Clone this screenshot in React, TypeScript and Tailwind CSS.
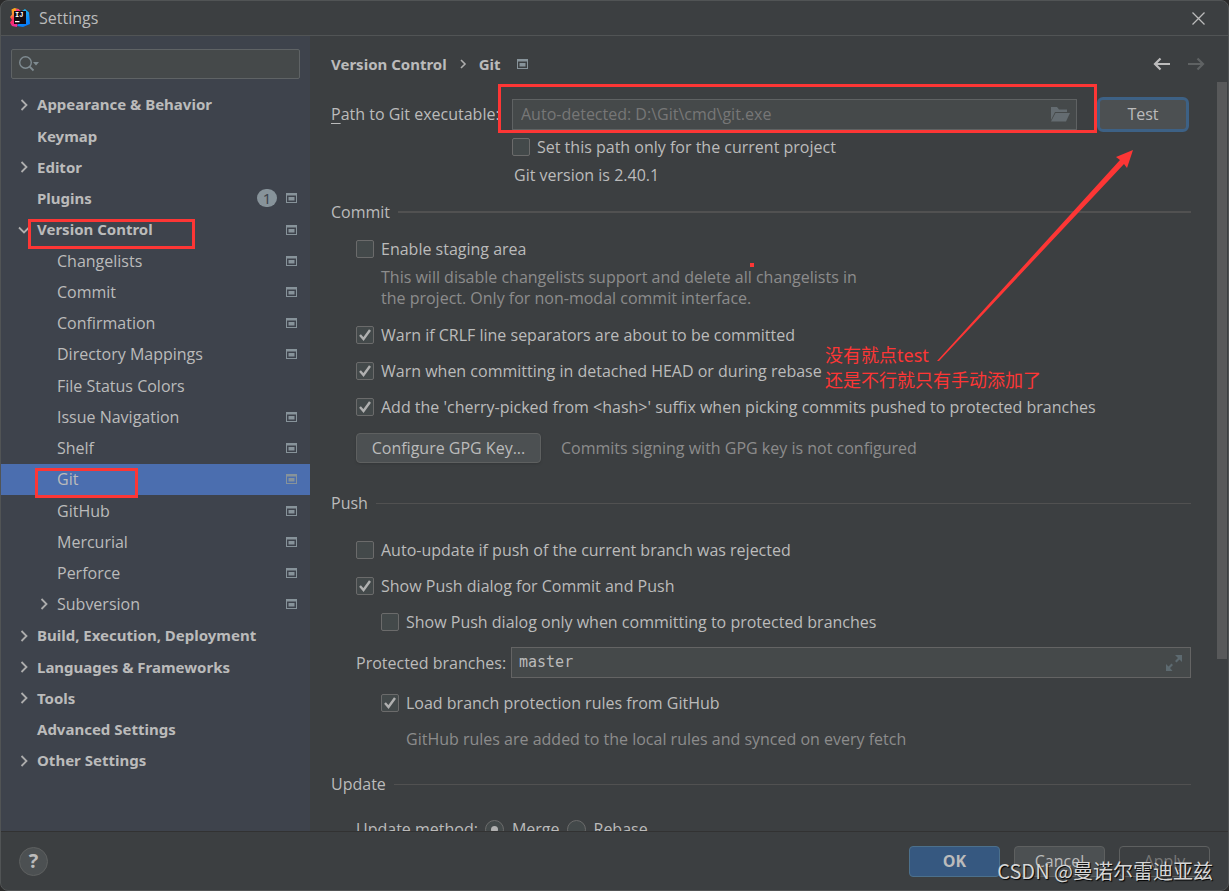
import { useState } from 'react';
import type { ReactNode } from 'react';

type TreeItem = {
  label: string;
  level?: number;
  arrow?: 'right' | 'down';
  project?: boolean;
  badge?: number;
};

const TREE: TreeItem[] = [
  { label: 'Appearance & Behavior', arrow: 'right' },
  { label: 'Keymap' },
  { label: 'Editor', arrow: 'right' },
  { label: 'Plugins', badge: 1, project: true },
  { label: 'Version Control', arrow: 'down', project: true },
  { label: 'Changelists', level: 1, project: true },
  { label: 'Commit', level: 1, project: true },
  { label: 'Confirmation', level: 1, project: true },
  { label: 'Directory Mappings', level: 1, project: true },
  { label: 'File Status Colors', level: 1 },
  { label: 'Issue Navigation', level: 1, project: true },
  { label: 'Shelf', level: 1, project: true },
  { label: 'Git', level: 1, project: true },
  { label: 'GitHub', level: 1, project: true },
  { label: 'Mercurial', level: 1, project: true },
  { label: 'Perforce', level: 1, project: true },
  { label: 'Subversion', level: 1, arrow: 'right', project: true },
  { label: 'Build, Execution, Deployment', arrow: 'right' },
  { label: 'Languages & Frameworks', arrow: 'right' },
  { label: 'Tools', arrow: 'right' },
  { label: 'Advanced Settings' },
  { label: 'Other Settings', arrow: 'right' },
];

function Logo() {
  return (
    <svg width="20" height="20" viewBox="0 0 20 20" aria-hidden="true">
      <defs>
        <linearGradient id="warm" x1="0" y1="0" x2="0.3" y2="1">
          <stop offset="0" stopColor="#fdb60d" />
          <stop offset="0.4" stopColor="#fc8a3a" />
          <stop offset="0.6" stopColor="#fe2857" />
          <stop offset="1" stopColor="#f0309a" />
        </linearGradient>
        <linearGradient id="cool" x1="0" y1="0" x2="0.4" y2="1">
          <stop offset="0" stopColor="#20c5f0" />
          <stop offset="1" stopColor="#087cfa" />
        </linearGradient>
      </defs>
      <path d="M12 3 15 1l4 3.500L20 16l-7 3-6-1 4-6z" fill="url(#cool)" />
      <path d="M1.500 1.500 4.500 0l4 1 3 4-4 10-.5 4-5-1L0 14.500 2 12 0 9l2-2.500z" fill="url(#warm)" />
      <path d="M6 1 9 1.500 12 4H6z" fill="#fe2f8c" />
      <path d="M4 3h12v13H4z" fill="#120a10" />
      <text x="5" y="9" fill="#fff" fontSize="7" fontWeight="700" fontFamily="Liberation Mono, monospace">
        IJ
      </text>
      <path d="M5 13h4.500v1.200H5z" fill="#fff" />
    </svg>
  );
}

function Chevron({ dir }: { dir?: 'right' | 'down' }) {
  return (
    <svg width="12" height="12" viewBox="0 0 12 12" fill="none" stroke="#adadad" strokeWidth="1.8" aria-hidden="true">
      {dir === 'right' && <path d="M3.500 1 8.500 6l-5 5" />}
      {dir === 'down' && <path d="M1 3.500 6 8.500l5-5" />}
    </svg>
  );
}

function ProjectIcon() {
  return (
    <svg width="11" height="10" viewBox="0 0 11 10" className="shrink-0" aria-hidden="true">
      <path d="M0 0h11v10H0zM1 2.500V9h9V2.500z" fill="#87939a" fillRule="evenodd" />
      <path d="M2.500 4h6v3.500h-6z" fill="#87939a" />
    </svg>
  );
}

function Check({
  id,
  label,
  initial = false,
}: {
  id: string;
  label: string;
  initial?: boolean;
}) {
  const [checked, setChecked] = useState(initial);

  return (
    <div className="flex h-6 items-center gap-[7px]">
      <span className="grid size-[18px] shrink-0">
        <input
          type="checkbox"
          id={id}
          checked={checked}
          onChange={(e) => setChecked(e.target.checked)}
          className="col-start-1 row-start-1 size-[18px] appearance-none rounded-xs border border-[#6b6b6b] bg-[#43494a]"
        />
        {checked && (
          <svg
            viewBox="0 0 18 18"
            fill="none"
            stroke="#b0b0b0"
            strokeWidth="2.400"
            className="pointer-events-none col-start-1 row-start-1"
            aria-hidden="true"
          >
            <path d="M4 9l3.500 4L14 4" />
          </svg>
        )}
      </span>
      <label htmlFor={id} className="whitespace-nowrap">
        {label}
      </label>
    </div>
  );
}

function Section({ title, thick = false }: { title: string; thick?: boolean }) {
  return (
    <div className="flex h-6 items-center gap-2">
      <h2>{title}</h2>
      <hr className={`flex-1 border-0 bg-[#515151] ${thick ? 'h-[2px]' : 'h-px'}`} />
    </div>
  );
}

function Radio({
  value,
  current,
  onSelect,
}: {
  value: string;
  current: string;
  onSelect: (value: string) => void;
}) {
  return (
    <label className="flex items-center gap-2">
      <span className="grid size-[19px] shrink-0 place-items-center">
        <input
          type="radio"
          name="update-method"
          checked={current === value}
          onChange={() => onSelect(value)}
          className="col-start-1 row-start-1 size-[19px] appearance-none rounded-full border border-[#6b6b6b] bg-[#43494a]"
        />
        {current === value && (
          <span className="pointer-events-none col-start-1 row-start-1 size-[7px] rounded-full bg-[#b0b0b0]" />
        )}
      </span>
      {value}
    </label>
  );
}

function DialogButton({ children, className }: { children: ReactNode; className: string }) {
  return (
    <button type="button" className={`h-[31px] w-[91px] rounded-sm border ${className}`}>
      {children}
    </button>
  );
}

function Sidebar() {
  const [selected, setSelected] = useState('Git');
  const [query, setQuery] = useState('');

  return (
    <aside className="flex w-[309px] shrink-0 flex-col bg-[#3e434c] pb-[55px]">
      <div className="mx-[10px] mt-[13px] mb-[10px] flex h-[30px] items-center rounded-xs border border-[#5f6365] bg-[#45494a] pl-[7px]">
        <svg width="21" height="16" viewBox="0 0 21 16" fill="none" aria-hidden="true">
          <circle cx="6.500" cy="6.500" r="5.800" stroke="#7f8b91" strokeWidth="1.400" />
          <path d="M10.500 10.500l4 4" stroke="#7f8b91" strokeWidth="1.800" />
          <path d="M14 6h6l-3 3.500z" fill="#7f8b91" />
        </svg>
        <input
          type="text"
          aria-label="Search settings"
          value={query}
          onChange={(e) => setQuery(e.target.value)}
          className="min-w-0 flex-1 bg-transparent px-1 outline-none"
        />
      </div>

      <ul className="flex flex-1 flex-col">
        {TREE.map((item) => (
          <li key={item.label} className="flex flex-1">
            <button
              type="button"
              onClick={() => setSelected(item.label)}
              className={`flex flex-1 items-center gap-[7px] pr-[13px] text-left ${
                item.level ? 'pl-[37px]' : "pl-[17px] font-['Noto_Sans',sans-serif] text-[15px] font-bold"
              } ${selected === item.label ? 'bg-[#4b6eaf]' : ''}`}
            >
              <Chevron dir={item.arrow} />
              <span className="flex-1 whitespace-nowrap">{item.label}</span>
              {item.badge && (
                <span className="mr-[2px] flex h-[18px] w-5 items-center justify-center rounded-full bg-[#87939a] font-normal text-[#3e434c]">
                  {item.badge}
                </span>
              )}
              {item.project && <ProjectIcon />}
            </button>
          </li>
        ))}
      </ul>
    </aside>
  );
}

function GitSettings() {
  const [path, setPath] = useState('');
  const [branches, setBranches] = useState('master');
  const [method, setMethod] = useState('Merge');

  return (
    <main className="flex min-w-0 flex-1 flex-col">
      <div className="flex h-[46px] shrink-0 items-center pt-[10px] pr-[23px] pl-[21px] font-['Noto_Sans',sans-serif] text-[15px] font-bold">
        <span>Version Control</span>
        <svg width="8" height="12" viewBox="0 0 8 12" fill="none" stroke="#adadad" strokeWidth="1.600" className="mx-3" aria-hidden="true">
          <path d="M2 2l4 4-4 4" />
        </svg>
        <span className="mr-4">Git</span>
        <ProjectIcon />
        <button type="button" aria-label="Back" className="ml-auto">
          <svg width="18" height="14" viewBox="0 0 18 14" fill="none" stroke="#bcbcbc" strokeWidth="2.200">
            <path d="M17 7H2M7.500 1.500 2 7l5.500 5.500" />
          </svg>
        </button>
        <button type="button" aria-label="Forward" className="ml-4">
          <svg width="18" height="14" viewBox="0 0 18 14" fill="none" stroke="#5f6263" strokeWidth="2.200">
            <path d="M1 7h15M10.500 1.500 16 7l-5.500 5.500" />
          </svg>
        </button>
      </div>

      <div className="flex min-h-0 flex-1 pr-px">
        <div className="min-w-0 flex-1 overflow-hidden pt-[14px] pr-[26px] pl-[21px]">
          <div className="flex h-9 items-center pr-[2px]">
            <label htmlFor="git-path" className="w-[181px] shrink-0 whitespace-nowrap">
              <span className="underline underline-offset-3">P</span>ath to Git executable:
            </label>
            <div className="flex h-[31px] min-w-0 flex-1 items-center border border-[#5f6263] bg-[#45494a] pr-[6px] pl-2">
              <input
                id="git-path"
                type="text"
                value={path}
                onChange={(e) => setPath(e.target.value)}
                placeholder="Auto-detected: D:\Git\cmd\git.exe"
                className="min-w-0 flex-1 bg-transparent outline-none placeholder:text-[#777777]"
              />
              <svg width="19" height="15" viewBox="0 0 19 15" fill="#646c71" aria-hidden="true">
                <path d="M0 0h6l2 2.500h8V5H4L0 13z" />
                <path d="M4.500 6H19l-4 8.500H0z" />
              </svg>
            </div>
            <button
              type="button"
              className="ml-5 h-[35px] w-[92px] shrink-0 rounded-md border-3 border-[#3d6185] bg-[#4c5052] outline-none"
            >
              Test
            </button>
          </div>
          <div className="mt-[3px] pl-[181px]">
            <Check id="project-only" label="Set this path only for the current project" />
            <p className="mt-1 h-6 leading-6 pl-[2px]">Git version is 2.40.1</p>
          </div>

          <div className="mt-[13px]">
            <Section title="Commit" thick />
            <div className="mt-[13px] pl-[25px]">
              <Check id="staging" label="Enable staging area" />
              <p className="mt-[6px] pl-[25px] leading-[21px] text-[#8c8c8c]">
                This will disable changelists support and delete all changelists in
                <br />
                the project. Only for non-modal commit interface.
              </p>
              <div className="mt-[14px] flex flex-col gap-3">
                <Check id="crlf" label="Warn if CRLF line separators are about to be committed" initial />
                <Check id="detached" label="Warn when committing in detached HEAD or during rebase" initial />
                <Check
                  id="cherry-pick"
                  label="Add the 'cherry-picked from <hash>' suffix when picking commits pushed to protected branches"
                  initial
                />
              </div>
              <div className="mt-[14px] flex items-center gap-5">
                <button
                  type="button"
                  className="h-[30px] w-[185px] rounded-sm border border-[#5e6060] bg-[#4c5052] shadow-sm"
                >
                  Configure GPG Key...
                </button>
                <span className="text-[#8c8c8c]">Commits signing with GPG key is not configured</span>
              </div>
            </div>
          </div>

          <div className="mt-[28px]">
            <Section title="Push" />
            <div className="mt-[23px] flex flex-col gap-3 pl-[25px]">
              <Check id="auto-update" label="Auto-update if push of the current branch was rejected" />
              <Check id="push-dialog" label="Show Push dialog for Commit and Push" initial />
              <div className="pl-[25px]">
                <Check id="push-protected" label="Show Push dialog only when committing to protected branches" />
              </div>
              <div className="my-px flex items-center">
                <label htmlFor="branches" className="w-[155px] shrink-0 whitespace-nowrap">
                  Protected branches:
                </label>
                <div className="flex h-[31px] min-w-0 flex-1 items-center border border-[#646464] bg-[#45494a] pr-2 pl-[7px]">
                  <input
                    id="branches"
                    type="text"
                    value={branches}
                    onChange={(e) => setBranches(e.target.value)}
                    className="min-w-0 flex-1 bg-transparent font-['DejaVu_Sans_Mono',monospace] text-[15px] outline-none"
                  />
                  <svg width="16" height="16" viewBox="0 0 16 16" aria-hidden="true">
                    <path d="M9 0h7v7l-2.500-2.500-3 3-1.500-1.500 3-3zM0 9l2.500 2.500 3-3L7 10l-3 3 2.500 3H0z" fill="#5d6a70" />
                  </svg>
                </div>
              </div>
              <div className="pl-[25px]">
                <Check id="github-rules" label="Load branch protection rules from GitHub" initial />
              </div>
              <p className="h-6 pl-[50px] leading-6 text-[#8c8c8c]">
                GitHub rules are added to the local rules and synced on every fetch
              </p>
            </div>
          </div>

          <div className="mt-[21px]">
            <Section title="Update" />
            <div className="mt-[21px] flex h-6 items-center gap-[7px] pl-[25px]">
              <span>Update method:</span>
              <Radio value="Merge" current={method} onSelect={setMethod} />
              <Radio value="Rebase" current={method} onSelect={setMethod} />
            </div>
          </div>
        </div>
        <div className="h-[77%] w-[10px] shrink-0 bg-[#58595a]" />
      </div>
    </main>
  );
}

/* Red marks and note drawn over the window */
function Annotations() {
  return (
    <div className="pointer-events-none absolute inset-0 text-[#fd3635]">
      <div className="absolute top-[219px] left-[28px] h-[30px] w-[167px] border-3 border-[#fd3635]" />
      <div className="absolute top-[468px] left-[35px] h-[30px] w-[103px] border-3 border-[#fd3635]" />
      <div className="absolute top-[84px] left-[498px] h-[49px] w-[599px] border-3 border-[#fd3635]" />
      <div className="absolute top-[263px] left-[750px] size-1 bg-[#fd3635]" />
      <svg width="200" height="214" viewBox="0 0 200 214" className="absolute top-[149px] left-[935px]" aria-hidden="true">
        <path d="M2 212 185 11 181 8 198 1 192 19 189 15 4 212z" fill="#fd3635" />
      </svg>
      <p className="absolute top-[343px] left-[825px] font-['Noto_Sans','Noto_Sans_CJK_SC',sans-serif] text-lg leading-[25px] whitespace-nowrap">
        没有就点test
        <br />
        还是不行就只有手动添加了
      </p>
    </div>
  );
}

export default function App() {
  return (
    <div className="relative h-screen bg-[#2b2b2b] font-['Open_Sans',sans-serif] text-base text-[#bbbbbb]">
      <div className="flex h-full flex-col overflow-hidden rounded-lg border border-[#515455] bg-[#3c3f41]">
        <header className="flex h-[35px] shrink-0 items-center border-b border-[#515455] pr-[23px] pl-[9px]">
          <Logo />
          <h1 className="ml-[9px]">Settings</h1>
          <button type="button" aria-label="Close" className="ml-auto">
            <svg width="13" height="13" viewBox="0 0 13 13" stroke="#bbbbbb" strokeWidth="1.300">
              <path d="M.5.5l12 12M12.500.5l-12 12" />
            </svg>
          </button>
        </header>

        <div className="flex min-h-0 flex-1">
          <Sidebar />
          <GitSettings />
        </div>

        <footer className="flex h-[59px] shrink-0 items-center gap-[14px] border-t border-[#323232] pr-[18px] pl-[18px]">
          <button
            type="button"
            aria-label="Help"
            className="mr-auto size-[29px] rounded-full border border-[#5e6060] bg-[#4c5052] text-xl leading-none font-bold"
          >
            ?
          </button>
          <DialogButton className="border-[#4c708c] bg-[#365880] font-bold">OK</DialogButton>
          <DialogButton className="border-[#5e6060] bg-[#4c5052]">Cancel</DialogButton>
          <DialogButton className="border-[#5e6060] text-[#777777]">Apply</DialogButton>
        </footer>
      </div>

      <Annotations />
      <p className="pointer-events-none absolute right-4 bottom-[6px] font-['Noto_Sans_CJK_SC',sans-serif] text-xl text-[#d6d6d6] text-shadow-[1px_1px_1px_#000000]">
        CSDN @曼诺尔雷迪亚兹
      </p>
    </div>
  );
}
